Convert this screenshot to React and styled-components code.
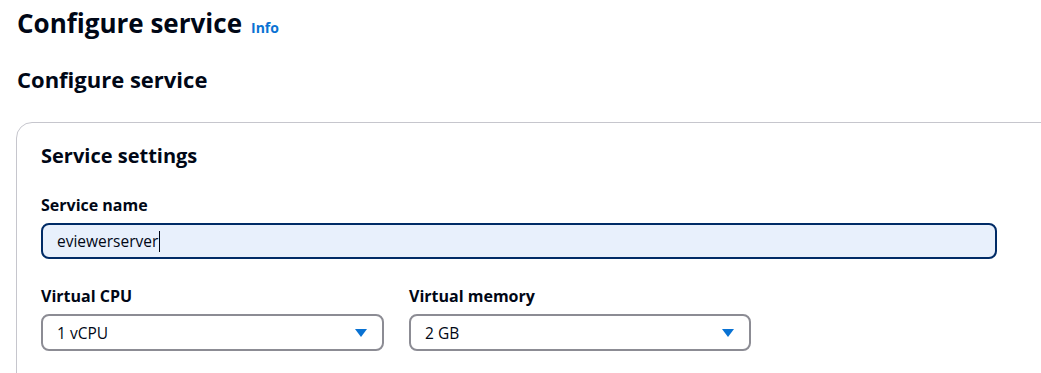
import styled, { createGlobalStyle } from "styled-components";

const GlobalStyle = createGlobalStyle`
  body {
    margin: 0;
    background: #ffffff;
    font-family: "Open Sans", "Noto Sans", Arial, sans-serif;
    color: #000716;
    overflow: hidden;
  }
`;

const Page = styled.main`
  padding: 4px 0 0 17px;
  width: 1200px;
`;

const TitleRow = styled.div`
  display: flex;
  align-items: baseline;
  gap: 9px;
`;

const PageTitle = styled.h1`
  margin: 0;
  font-size: 26px;
  line-height: 38px;
  font-weight: 700;
`;

const InfoLink = styled.a`
  font-size: 14px;
  font-weight: 700;
  color: #0972d3;
  text-decoration: none;
`;

const SectionTitle = styled.h2`
  margin: 22px 0 0;
  font-size: 22px;
  line-height: 30px;
  font-weight: 700;
`;

const Container = styled.section`
  margin: 28px 0 0 -1px;
  border: 1px solid #c6c6cd;
  border-radius: 16px;
  padding: 16px 24px 40px;
`;

const ContainerTitle = styled.h3`
  margin: 0;
  font-size: 20px;
  line-height: 34px;
  font-weight: 700;
`;

const Field = styled.div`
  display: flex;
  flex-direction: column;
  gap: 8px;
  width: ${(p) => p.$width};
`;

const FieldRow = styled.div`
  display: flex;
  gap: 25px;
  margin-top: 27px;
`;

const Label = styled.label`
  font-size: 16px;
  font-weight: 700;
  line-height: 20px;
`;

const TextInput = styled.div`
  box-sizing: border-box;
  height: 36px;
  border: 2px solid #002b66;
  border-radius: 8px;
  background: #e8f0fc;
  padding: 0 14px;
  display: flex;
  align-items: center;
  font-size: 15.5px;
`;

const Caret = styled.span`
  display: inline-block;
  width: 1px;
  height: 21px;
  background: #000716;
  margin-left: 1px;
`;

const Select = styled.div`
  box-sizing: border-box;
  height: 37px;
  border: 2px solid #8c8c94;
  border-radius: 8px;
  background: #ffffff;
  padding: 0 14px;
  display: flex;
  align-items: center;
  justify-content: space-between;
  font-size: 15.5px;
`;

function CaretDown() {
  return (
    <svg width="14" height="10" viewBox="0 0 14 10">
      <path d="M1 1h12L7 9z" fill="#0972d3" />
    </svg>
  );
}

export default function App() {
  return (
    <>
      <GlobalStyle />
      <Page>
        <TitleRow>
          <PageTitle>Configure service</PageTitle>
          <InfoLink href="#">Info</InfoLink>
        </TitleRow>
        <SectionTitle>Configure service</SectionTitle>
        <Container>
          <ContainerTitle>Service settings</ContainerTitle>
          <Field $width="956px" style={{ marginTop: 22 }}>
            <Label>Service name</Label>
            <TextInput>
              eviewerserver
              <Caret />
            </TextInput>
          </Field>
          <FieldRow>
            <Field $width="343px">
              <Label>Virtual CPU</Label>
              <Select>
                1 vCPU
                <CaretDown />
              </Select>
            </Field>
            <Field $width="342px">
              <Label>Virtual memory</Label>
              <Select>
                2 GB
                <CaretDown />
              </Select>
            </Field>
          </FieldRow>
        </Container>
      </Page>
    </>
  );
}
